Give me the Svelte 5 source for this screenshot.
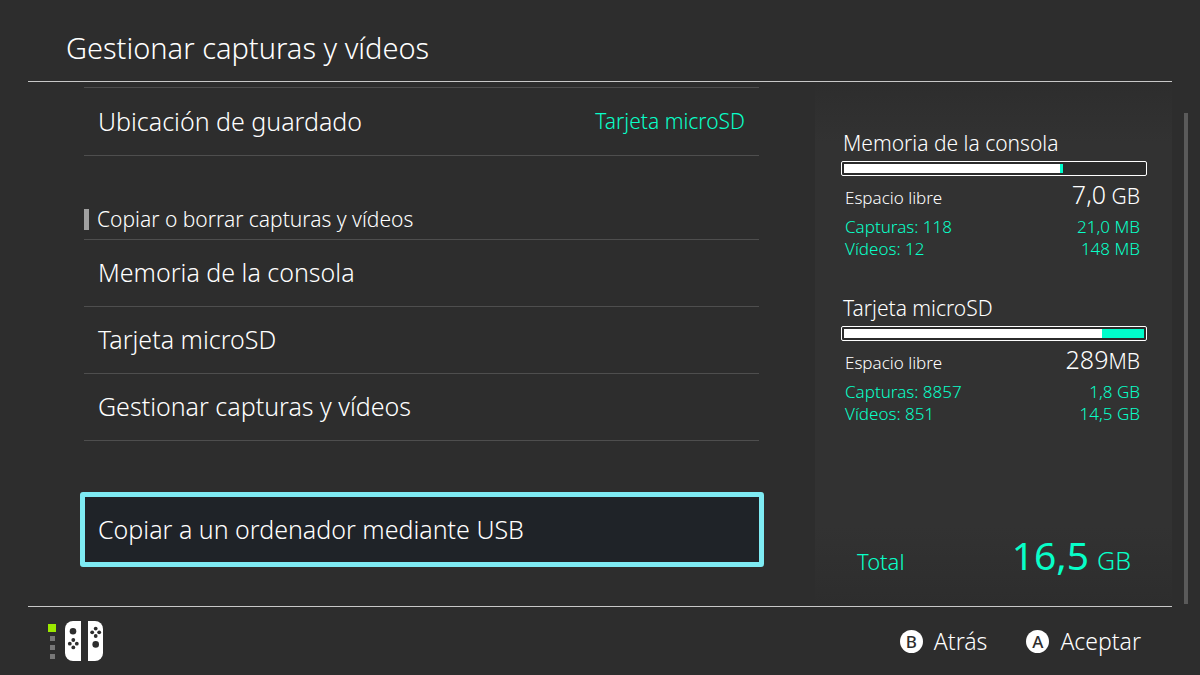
<script lang="ts">
	type Storage = {
		name: string;
		used: number;
		media: number;
		free: [string, string];
		captures: [number, string];
		videos: [number, string];
	};

	const storages: Storage[] = [
		{
			name: 'Memoria de la consola',
			used: 72,
			media: 1,
			free: ['7,0', ' GB'],
			captures: [118, '21,0 MB'],
			videos: [12, '148 MB']
		},
		{
			name: 'Tarjeta microSD',
			used: 86,
			media: 14,
			free: ['289', 'MB'],
			captures: [8857, '1,8 GB'],
			videos: [851, '14,5 GB']
		}
	];

	const copyItems = ['Memoria de la consola', 'Tarjeta microSD', 'Gestionar capturas y vídeos'];
	const usbItem = 'Copiar a un ordenador mediante USB';

	let selected = $state(usbItem);
</script>

<div class="screen">
	<header>
		<h1>Gestionar capturas y vídeos</h1>
	</header>

	<main>
		<section class="list">
			<button class="row first">
				<span>Ubicación de guardado</span>
				<span class="value">Tarjeta microSD</span>
			</button>

			<h2>Copiar o borrar capturas y vídeos</h2>
			{#each copyItems as item (item)}
				<button class="row" class:selected={selected === item} onclick={() => (selected = item)}>
					{item}
				</button>
			{/each}

			<button
				class="row usb"
				class:selected={selected === usbItem}
				onclick={() => (selected = usbItem)}
			>
				{usbItem}
			</button>
		</section>

		<aside>
			{#each storages as s (s.name)}
				<section class="storage">
					<h3>{s.name}</h3>
					<div class="bar">
						<div class="used" style:width="{s.used}%"></div>
						<div class="media" style:width="{s.media}%"></div>
					</div>
					<dl>
						<div class="free">
							<dt>Espacio libre</dt>
							<dd>{s.free[0]}<small>{s.free[1]}</small></dd>
						</div>
						<div class="detail">
							<dt>Capturas: {s.captures[0]}</dt>
							<dd>{s.captures[1]}</dd>
						</div>
						<div class="detail">
							<dt>Vídeos: {s.videos[0]}</dt>
							<dd>{s.videos[1]}</dd>
						</div>
					</dl>
				</section>
			{/each}

			<div class="total">
				<span>Total</span>
				<strong>16,5<small>GB</small></strong>
			</div>
		</aside>

		<div class="scrollbar"></div>
	</main>

	<footer>
		<div class="controllers">
			<div class="players">
				<i class="on"></i>
				<i></i>
				<i></i>
				<i></i>
			</div>
			<svg width="39" height="40" viewBox="0 0 39 40" aria-hidden="true">
				<path d="M8 0h8v40H8a8 8 0 0 1-8-8V8a8 8 0 0 1 8-8z" fill="#fff" />
				<path d="M23 0h7a8 8 0 0 1 8 8v24a8 8 0 0 1-8 8h-7z" fill="#fff" />
				<g fill="#2d2d2d">
					<circle cx="8" cy="10.3" r="3.3" />
					<circle cx="8.3" cy="19" r="1.9" />
					<circle cx="4.8" cy="22.7" r="1.9" />
					<circle cx="11.8" cy="22.7" r="1.9" />
					<circle cx="8.3" cy="26.4" r="1.9" />
					<circle cx="30.7" cy="7.6" r="1.9" />
					<circle cx="27.2" cy="11.3" r="1.9" />
					<circle cx="34.2" cy="11.3" r="1.9" />
					<circle cx="30.7" cy="15" r="1.9" />
					<circle cx="30.7" cy="23.4" r="3.3" />
				</g>
			</svg>
		</div>
		<div class="hints">
			<button><b>B</b>Atrás</button>
			<button><b>A</b>Aceptar</button>
		</div>
	</footer>
</div>

<style>
	:global(body) {
		margin: 0;
		background: #2d2d2d;
	}

	.screen {
		display: flex;
		flex-direction: column;
		min-height: 100vh;
		box-sizing: border-box;
		background: #2d2d2d;
		color: #fff;
		font-family: 'Noto Sans', sans-serif;
		font-weight: 300;
	}

	h1,
	h2,
	h3,
	dl,
	dd {
		margin: 0;
		font-weight: inherit;
	}
	button {
		padding: 0;
		border: 0;
		background: none;
		color: inherit;
		font: inherit;
		text-align: left;
		cursor: pointer;
	}
	small {
		font-size: 21px;
		white-space: pre;
	}

	header {
		margin: 0 28px;
		padding: 27px 38px 13px;
		border-bottom: 1px solid #c8c8c8;
	}
	h1 {
		font-size: 29px;
		line-height: 41px;
	}

	main {
		flex: 1;
		display: flex;
		padding: 0 12px 0 84px;
	}

	.list {
		flex: 1;
		display: flex;
		flex-direction: column;
		padding-top: 5px;
	}
	.row {
		display: flex;
		justify-content: space-between;
		align-items: center;
		min-height: 67px;
		padding: 0 14px 2px;
		border-bottom: 1px solid #4e4e4e;
		font-size: 25px;
	}
	.row.first {
		min-height: 69px;
		border-top: 1px solid #4e4e4e;
	}
	.value {
		color: #08ffc8;
		font-size: 21px;
	}
	h2 {
		display: flex;
		align-items: center;
		gap: 8px;
		margin-top: 47px;
		padding: 3px 0 7px;
		border-bottom: 1px solid #4e4e4e;
		font-size: 21px;
		line-height: 26px;
	}
	h2::before {
		content: '';
		width: 5px;
		height: 21px;
		background: #a0a0a0;
	}
	.usb {
		margin-top: 51px;
	}
	.row.selected {
		min-height: 75px;
		margin-right: -5px;
		margin-left: -4px;
		border: 5px solid #7eebf3;
		border-radius: 3px;
		padding: 0 13px 2px;
		background: #1f2328;
	}

	aside {
		display: flex;
		flex-direction: column;
		width: 357px;
		box-sizing: border-box;
		margin-left: 56px;
		padding: 47px 25px 21px 26px;
		background: linear-gradient(#2d2d2d, #323232 60px, #323232 85%, #2d2d2d);
	}
	.storage {
		margin-bottom: 34px;
	}
	h3 {
		padding-left: 2px;
		font-size: 21px;
		line-height: 28px;
	}
	.bar {
		display: flex;
		height: 9px;
		margin-top: 4px;
		padding: 2px;
		border: 1px solid #fff;
		border-radius: 2px;
		background: #2b2b2b;
	}
	.used {
		background: #fff;
	}
	.media {
		background: #00fccb;
	}
	dl {
		padding: 0 7px 0 4px;
	}
	dl div {
		display: flex;
		justify-content: space-between;
		align-items: baseline;
		font-size: 17px;
		line-height: 22px;
	}
	dl .free {
		line-height: 36px;
	}
	.free dd {
		font-size: 25px;
	}
	.detail {
		color: #08ffc8;
	}

	.total {
		display: flex;
		justify-content: space-between;
		align-items: baseline;
		margin-top: auto;
		padding: 0 16px;
		color: #08ffc8;
		font-size: 22px;
		line-height: 48px;
	}
	.total strong {
		font-size: 39px;
		font-weight: 400;
	}
	.total small {
		margin-left: 8px;
		font-size: 25px;
		font-weight: 300;
	}

	.scrollbar {
		width: 4px;
		margin: 31px 0 2px 12px;
		background: #5a5a5a;
	}

	footer {
		display: flex;
		justify-content: space-between;
		align-items: center;
		margin: 0 28px;
		padding: 0 31px 0 20px;
		height: 68px;
		border-top: 1px solid #c8c8c8;
	}
	.controllers {
		display: flex;
		align-items: center;
		gap: 9px;
	}
	.players {
		display: flex;
		flex-direction: column;
		align-items: center;
		gap: 4px;
	}
	.players i {
		width: 5px;
		height: 5px;
		background: #777;
	}
	.players .on {
		width: 8px;
		height: 8px;
		background: #9be800;
	}
	.hints {
		display: flex;
		gap: 39px;
	}
	.hints button {
		display: flex;
		align-items: center;
		gap: 11px;
		font-size: 23px;
	}
	.hints b {
		width: 23px;
		border-radius: 50%;
		background: #fff;
		color: #2d2d2d;
		font-size: 17px;
		font-weight: 500;
		line-height: 23px;
		text-align: center;
	}
</style>
